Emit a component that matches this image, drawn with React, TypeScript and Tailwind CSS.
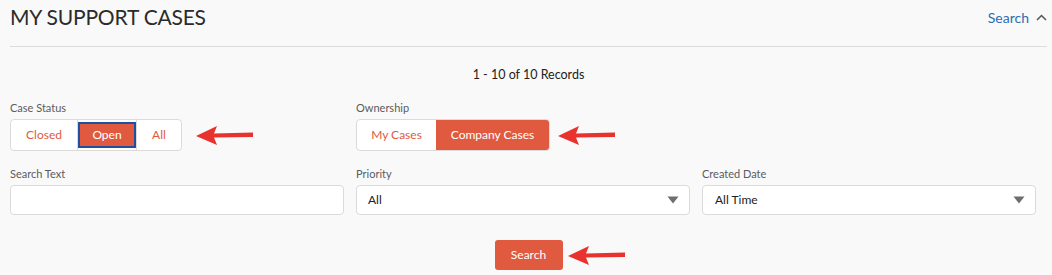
import React from 'react';

const RedArrow: React.FC = () => (
  <svg width="60" height="22" viewBox="0 0 60 22" className="shrink-0">
    <path d="M1 12 L22 2 L19 9.5 L58 8.5 L58 13 L19 13.5 L22 21 Z" fill="#e8322e" />
  </svg>
);

const Caret: React.FC = () => (
  <svg width="12" height="8" viewBox="0 0 12 8">
    <path d="M0.5 0.5 H11.5 L6 7.5 Z" fill="#706e6b" />
  </svg>
);

const Label: React.FC<{ text: string }> = ({ text }) => (
  <div className="text-[11px] leading-[14px] text-[#5a5c60] mb-[4px]">{text}</div>
);

export default function App() {
  return (
    <div className="w-[1052px] h-[275px] bg-[#f9f9f9] overflow-hidden font-['Lato','Liberation_Sans',sans-serif] text-[#333]">
      <div className="pl-[10px] pr-[5px]">
        <div className="flex items-center justify-between h-[33px] pt-[1px]">
          <h1 className="text-[21px] leading-[26px] text-[#2b2b2b] tracking-[-0.2px]">MY SUPPORT CASES</h1>
          <button className="flex items-center gap-[7px] text-[14px] text-[#2a6db1]">
            Search
            <svg width="11" height="7" viewBox="0 0 11 7">
              <path d="M1 6 L5.5 1.5 L10 6" fill="none" stroke="#555" strokeWidth="1.5" />
            </svg>
          </button>
        </div>
        <div className="mt-[13px] h-px bg-[#dcdcdc]" />

        <div className="text-center text-[12.5px] leading-[16px] text-[#222] mt-[20px]">1 - 10 of 10 Records</div>

        <div className="grid grid-cols-[334px_334px_334px] gap-x-[12px] mt-[18px]">
          <div>
            <Label text="Case Status" />
            <div className="flex items-center gap-[13px]">
              <div className="flex h-[32px] bg-white border border-[#dddbda] rounded-[4px] text-[12px] text-[#e05a40]">
                <button className="w-[66px]">Closed</button>
                <div className="w-px bg-[#dddbda]" />
                <button className="w-[58px] my-[2px] bg-[#e05a40] border-2 border-[#1e4fa0] text-white">Open</button>
                <div className="w-px bg-[#dddbda]" />
                <button className="w-[44px]">All</button>
              </div>
              <RedArrow />
            </div>
          </div>
          <div>
            <Label text="Ownership" />
            <div className="flex items-center gap-[7px]">
              <div className="flex h-[32px] bg-white border border-[#dddbda] rounded-[4px] text-[12px] overflow-hidden">
                <button className="w-[79px] text-[#e05a40]">My Cases</button>
                <button className="w-[113px] bg-[#e05a40] text-white">Company Cases</button>
              </div>
              <RedArrow />
            </div>
          </div>
          <div />
        </div>

        <div className="grid grid-cols-[334px_334px_334px] gap-x-[12px] mt-[16px]">
          <div>
            <Label text="Search Text" />
            <input className="w-full h-[30px] bg-white border border-[#dddbda] rounded-[4px] outline-none" />
          </div>
          <div>
            <Label text="Priority" />
            <div className="flex items-center justify-between h-[30px] bg-white border border-[#dddbda] rounded-[4px] pl-[11px] pr-[10px] text-[12px] text-[#222]">
              <span>All</span>
              <Caret />
            </div>
          </div>
          <div>
            <Label text="Created Date" />
            <div className="flex items-center justify-between h-[30px] bg-white border border-[#dddbda] rounded-[4px] pl-[12px] pr-[10px] text-[12px] text-[#222]">
              <span>All Time</span>
              <Caret />
            </div>
          </div>
        </div>

        <div className="flex justify-center mt-[25px] pl-[64px]">
          <div className="flex items-center gap-[4px]">
            <button className="w-[68px] h-[30px] bg-[#e05a40] rounded-[3px] text-white text-[12px]">Search</button>
            <RedArrow />
          </div>
        </div>
      </div>
    </div>
  );
}
